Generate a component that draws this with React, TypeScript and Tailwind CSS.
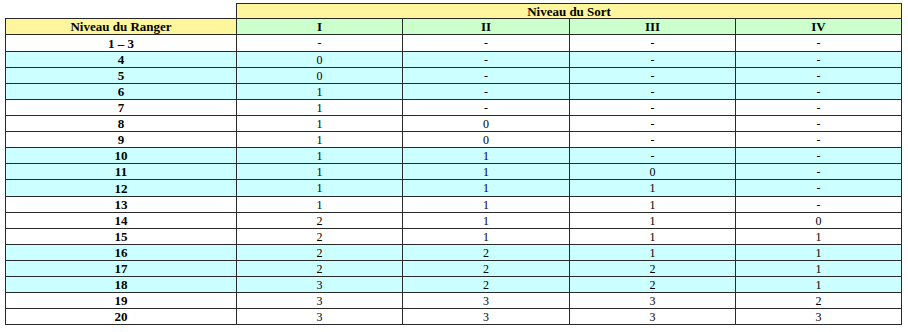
import React from 'react';

const rows: [string, string, string, string, string][] = [
  ['1 – 3', '-', '-', '-', '-'],
  ['4', '0', '-', '-', '-'],
  ['5', '0', '-', '-', '-'],
  ['6', '1', '-', '-', '-'],
  ['7', '1', '-', '-', '-'],
  ['8', '1', '0', '-', '-'],
  ['9', '1', '0', '-', '-'],
  ['10', '1', '1', '-', '-'],
  ['11', '1', '1', '0', '-'],
  ['12', '1', '1', '1', '-'],
  ['13', '1', '1', '1', '-'],
  ['14', '2', '1', '1', '0'],
  ['15', '2', '1', '1', '1'],
  ['16', '2', '2', '1', '1'],
  ['17', '2', '2', '2', '1'],
  ['18', '3', '2', '2', '1'],
  ['19', '3', '3', '3', '2'],
  ['20', '3', '3', '3', '3'],
];

// groups of three: white, cyan, white, cyan...
const shaded = (i: number) => Math.floor((i + 2) / 3) % 2 === 1;

export default function App() {
  return (
    <div className="w-[908px] h-[332px] bg-white pt-[3px] pl-[5px] font-['Liberation_Serif',serif] text-black">
      <table className="w-[896px] table-fixed border-collapse">
        <colgroup>
          <col className="w-[231px]" />
          <col className="w-[166px]" />
          <col className="w-[167px]" />
          <col className="w-[166px]" />
          <col className="w-[166px]" />
        </colgroup>
        <thead>
          <tr className="h-[15px]">
            <th className="p-0" />
            <th
              colSpan={4}
              className="p-0 border border-[#2a2a2a] bg-[#fdf69c] text-[13px] font-bold leading-none"
            >
              Niveau du Sort
            </th>
          </tr>
          <tr className="h-[16px]">
            <th className="p-0 border border-[#2a2a2a] bg-[#fdf69c] text-[13px] font-bold leading-none">
              Niveau du Ranger
            </th>
            {['I', 'II', 'III', 'IV'].map((n) => (
              <th
                key={n}
                className="p-0 border border-[#2a2a2a] bg-[#ccffcc] text-[13px] font-bold leading-none"
              >
                {n}
              </th>
            ))}
          </tr>
        </thead>
        <tbody>
          {rows.map((r, i) => (
            <tr
              key={r[0]}
              className={`${i === 0 || i === 9 ? 'h-[17px]' : 'h-[16px]'} ${shaded(i) ? 'bg-[#ccffff]' : 'bg-white'}`}
            >
              <td className="p-0 border border-[#2a2a2a] text-center text-[13px] font-bold leading-none">
                {r[0]}
              </td>
              {r.slice(1).map((v, j) => (
                <td
                  key={j}
                  className="p-0 border border-[#2a2a2a] text-center text-[12px] leading-none"
                >
                  {v}
                </td>
              ))}
            </tr>
          ))}
        </tbody>
      </table>
    </div>
  );
}
